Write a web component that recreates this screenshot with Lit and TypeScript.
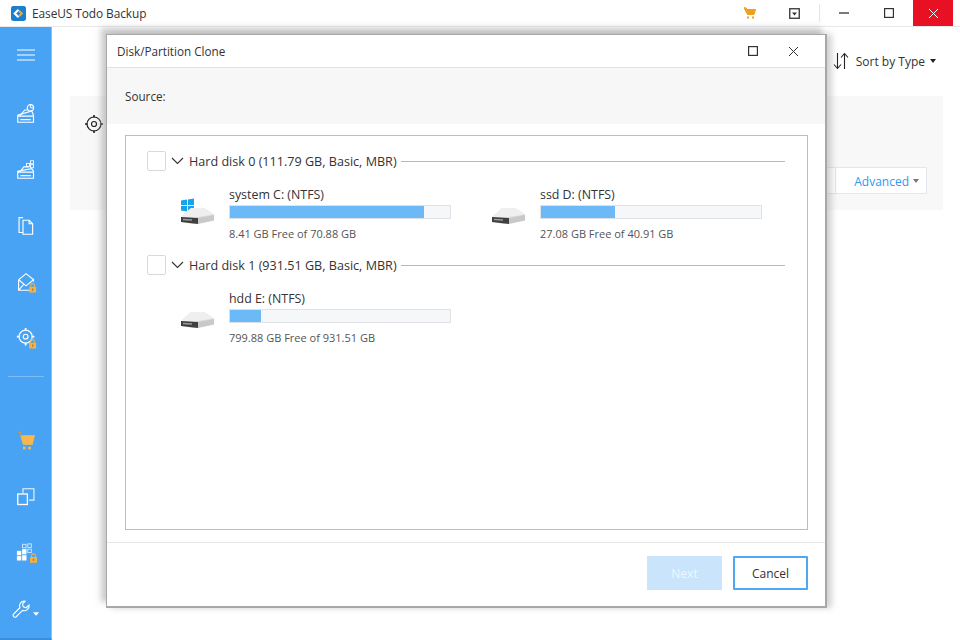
import { LitElement, html, css, svg } from "lit";
import { customElement } from "lit/decorators.js";

const lock = (x: number, y: number) => svg`<g transform="translate(${x} ${y})"><path d="M1.800 4V2.600a2.200 2.200 0 0 1 4.400 0V4" fill="none" stroke="#f5b044" stroke-width="1.200"/><rect x="0" y="4" width="8" height="6.500" rx=".6" fill="#f5b044"/><rect x="3.300" y="6" width="1.400" height="2.400" fill="#a9772a"/></g>`;

const navIcons = [
  svg`<path d="M5 14 10 8h4M18 9l2 5v8H2v-8zM2 15h18M5 19h12" fill="none" stroke="#fff" stroke-width="1.300"/><circle cx="16.500" cy="5.500" r="3.600" fill="none" stroke="#fff" stroke-width="1.300"/><path d="M16.500 2v3.500H20" fill="none" stroke="#fff" stroke-width="1"/>`,
  svg`<path d="M5 14 9 9h6M18 11l2 3v8H2v-8zM2 15h18M5 19h12" fill="none" stroke="#fff" stroke-width="1.300"/><rect x="12" y="5" width="3.500" height="3.500" fill="none" stroke="#fff"/><rect x="16.500" y="2" width="3.500" height="3.500" fill="none" stroke="#fff"/><rect x="16.500" y="6.500" width="3.500" height="3.500" fill="none" stroke="#fff"/>`,
  svg`<path d="M8 3H3.500v17H8M8 6h7l4 4v12H8zM15 6v4h4" fill="none" stroke="#fff" stroke-width="1.300"/>`,
  svg`<path d="M3 10 11.500 3 20 10M3 10v12h13M3 10l8.500 7 8.500-7v2M3 22l6-7" fill="none" stroke="#fff" stroke-width="1.300"/>${lock(15, 14)}`,
  svg`<circle cx="11" cy="11" r="7.500" fill="none" stroke="#fff" stroke-width="1.300"/><circle cx="11" cy="11" r="2.700" fill="none" stroke="#fff" stroke-width="1.300"/><path d="M11 1v3M11 18v3M1 11h3M18 11h3" stroke="#fff" stroke-width="2"/>${lock(15, 14)}`,
];
const navIcons2 = [
  svg`<path d="M5.500 5.500H21l-2.500 9.500H8.500z" fill="#f9b74e" stroke="#f9b74e" stroke-width="1.200"/><path d="M2.500 1.500h2.500l1.500 4.500" fill="none" stroke="#c99a4c" stroke-width="1.300"/><rect x="8" y="18" width="3" height="3" fill="#f9b74e"/><rect x="14" y="18" width="3" height="3" fill="#f9b74e"/>`,
  svg`<path d="M8 7V2h12.500v13H15" fill="none" stroke="#fff" stroke-width="1.300" opacity=".9"/><rect x="2" y="8" width="11" height="12" fill="none" stroke="#fff" stroke-width="1.500"/>`,
  svg`<g fill="#fff"><rect x="1" y="9" width="5" height="5"/><rect x="7" y="7" width="5" height="6"/><rect x="1" y="15" width="5" height="5"/><rect x="7" y="14" width="5" height="6"/></g><g fill="none" stroke="#fff" opacity=".8"><rect x="7.500" y="1.500" width="4" height="4"/><rect x="13.500" y="1" width="4" height="4"/><rect x="13.500" y="7" width="4" height="4"/></g>${lock(16, 12)}`,
  svg`<path d="M15 2.500a5.500 5.500 0 0 0-6 7.500L1.500 17.500a2.200 2.200 0 0 0 3 3L12 13a5.500 5.500 0 0 0 7.500-6L16 10l-3-1-1-3z" fill="none" stroke="#fff" stroke-width="1.300"/><path d="M24 15h7l-3.500 4z" fill="#fff"/>`,
];

const drive = (win: boolean) => html`<svg class="drive" viewBox="0 0 36 36" width="36" height="36">
  ${win ? svg`<g fill="#12a5ec" transform="translate(0 4)"><path d="M1 5.500 7 4.600V10H1zM8 4.400l6-.9V10H8zM1 11h6v5.400l-6-.9zM8 11h6v6.400l-6-.9z"/></g>` : ""}
  <path d="M1 26 11 17h13L34 23.500v6L13 33 1 31z" fill="#dcdcdc"/>
  <path d="M11 17h13L34 23.500 14 26.500 1 26z" fill="#efefef"/>
  <path d="M1 26 18 27V33L1 31z" fill="#3f3f3f"/>
  <path d="M18 27 34 24v5.500L18 33z" fill="#c9c9c9"/>
  <path d="M3 28.500 12 29" stroke="#9a9a9a" stroke-width="1.500"/>
</svg>`;

@customElement("app-root")
export class AppRoot extends LitElement {
  static styles = css`
    :host { display: block; width: 960px; height: 640px; overflow: hidden; position: relative; background: #fff;
      font-family: "Open Sans", "Noto Sans", sans-serif; color: #333; font-size: 11.700px; }
    * { box-sizing: border-box; }
    .titlebar { height: 27px; display: flex; align-items: center; background: #fff; border-bottom: 1px solid #e8e8e8; }
    .logo { margin: 0 6px 0 11px; }
    .app-name { font-size: 11.900px; color: #333; letter-spacing: -.08px; }
    .win { margin-left: auto; display: flex; align-items: center; height: 26px; padding-right: 7px; }
    .wbtn { width: 45px; height: 26px; display: flex; align-items: center; justify-content: center; }
    .wbtn.cart { width: 30px; margin-right: 12px; }
    .wbtn.drop { width: 36px; margin-right: 7px; }
    .wbtn.max { margin-right: 2px; }
    .wsep { width: 1px; height: 18px; background: #e5e5e5; margin-right: 1px; }
    .wbtn.close { width: 40px; background: #e81123; }
    .body { display: flex; height: 613px; }
    .side { width: 52px; background: #48a3f4; border-right: 1px solid #8ac4f7; border-bottom: 2px solid #3a8fdc;
      display: flex; flex-direction: column; align-items: center; padding-top: 22px; }
    .burger { width: 18px; height: 12px; margin-bottom: 38px; display: block; }
    .nav { width: 28px; height: 28px; display: flex; justify-content: center; align-items: center; margin-bottom: 28px; padding-left: 2px; }
    .nav svg { display: block; overflow: visible; }
    .rule { width: 36px; height: 1px; background: #7cbdf6; margin: -3px 0 50px; }
    .tools { margin-bottom: 0; padding-left: 0; }
    .main { flex: 1; padding: 20px 17px 0 18px; display: flex; flex-direction: column; }
    .sort { height: 28px; display: flex; justify-content: flex-end; align-items: center; gap: 7px; padding-right: 7px; font-size: 12px; }
    .sort .caret { width: 0; height: 0; border: 3.500px solid transparent; border-top: 4px solid #222; border-bottom: 0; margin-left: -2px; }
    .panel { margin-top: 21px; height: 114px; background: #f8f8f8; position: relative; display: flex; align-items: flex-end; justify-content: flex-end; padding: 0 16px 16px 0; }
    .cell { height: 27px; background: #fff; border: 1px solid #e2e6ee; }
    .cell.prev { width: 60px; border-right: 0; }
    .adv { width: 92px; display: flex; align-items: center; justify-content: flex-end; gap: 4px; padding: 1px 7px 0 0; color: #2b9af3; font-size: 12px; }
    .adv i { width: 0; height: 0; border: 3px solid transparent; border-top: 4px solid #777; border-bottom: 0; }
    .target { position: absolute; left: 14px; top: 18px; }

    .dialog { position: absolute; left: 106px; top: 34px; width: 721px; height: 574px; background: #fff;
      border: 2px solid #a8a8a8; border-width: 1px 2px 2px 1px; box-shadow: -5px -6px 6px rgba(150,150,150,.5), 5px 0 6px rgba(150,150,150,.4);
      display: flex; flex-direction: column; }
    .dhead { height: 33px; display: flex; align-items: center; padding-left: 10px; border-bottom: 1px solid #e3e3e3; flex: none; }
    .dtitle { flex: 1; }
    .dbtn { width: 40px; display: flex; justify-content: center; }
    .dbtn:last-child { margin-right: 12px; }
    .source { height: 56px; background: #f7f7f7; padding: 20px 0 0 18px; flex: none; line-height: 17px; }
    .tree { margin: 11px 17px 0 18px; height: 395px; flex: none; border: 1px solid #bdbdbd; padding: 14px 22px 0 21px; }
    .disk { display: flex; align-items: center; height: 22px; font-size: 12.600px; }
    .check { width: 19px; height: 20px; border: 1px solid #d5dae1; border-radius: 2px; margin-right: 5px; background: #fff; }
    .chev { margin-right: 5px; }
    .dname { white-space: nowrap; }
    .line { flex: 1; height: 1px; background: #b9b9b9; margin-left: 4px; }
    .parts { display: grid; grid-template-columns: 311px 273px; padding: 14px 0 6px 33px; }
    .part { display: flex; gap: 13px; height: 62px; }
    .drive { flex: none; margin-top: 5px; }
    .pinfo { width: 222px; flex: none; }
    .pname { line-height: 16px; height: 16px; margin-top: 1px; font-size: 12.400px; }
    .bar { height: 14px; margin-top: 2px; background: #f6f7f8; border: 1px solid #dfe3e8; }
    .fill { height: 100%; background: #6bb9f6; }
    .free { margin-top: 7px; font-size: 11px; color: #555; line-height: 15px; }
    .foot { margin-top: 12px; border-top: 1px solid #e6e6ea; flex: 1; display: flex; justify-content: flex-end; align-items: flex-start; gap: 11px; padding: 13px 17px 0 0; }
    .btn { width: 75px; height: 34px; display: flex; align-items: center; justify-content: center; font-size: 12px; }
    .next { background: #c9e4fb; color: #eef7ff; }
    .cancel { background: #fff; border: 2px solid #50a8f3; border-radius: 1px; color: #333; }
  `;

  private part(name: string, free: string, pct: number, win = false) {
    return html`<div class="part">${drive(win)}<div class="pinfo">
      <div class="pname">${name}</div>
      <div class="bar"><div class="fill" style="width:${pct}%"></div></div>
      <div class="free">${free}</div>
    </div></div>`;
  }

  private disk(name: string) {
    return html`<div class="disk"><div class="check"></div>
      <svg class="chev" width="13" height="8" viewBox="0 0 13 8"><path d="M1 1l5.500 5.500L12 1" fill="none" stroke="#333" stroke-width="1.100"/></svg>
      <span class="dname">${name}</span><div class="line"></div></div>`;
  }

  render() {
    return html`
      <div class="titlebar">
        <svg class="logo" width="15" height="15" viewBox="0 0 14 14"><rect width="14" height="14" rx="2" fill="#1b7fd0"/><path d="M7 3.500 3.500 7 7 10.500" fill="none" stroke="#fff" stroke-width="2"/><path d="M7.500 4.500 10 7 7.500 9.500" fill="none" stroke="#f5a623" stroke-width="2"/></svg>
        <span class="app-name">EaseUS Todo Backup</span>
        <div class="win">
          <div class="wbtn cart"><svg width="13" height="12" viewBox="0 0 13 12"><path d="M1 .8h2l1 1.700h8.500L11 7.500H4.500z" fill="#f0a020" stroke="#f0a020"/><rect x="4" y="9.500" width="2" height="2" fill="#f0a020"/><rect x="9" y="9.500" width="2" height="2" fill="#f0a020"/></svg></div>
          <div class="wbtn drop"><svg width="11" height="11" viewBox="0 0 11 11"><rect x=".75" y=".75" width="9.500" height="9.500" fill="none" stroke="#333" stroke-width="1.300"/><path d="M3 4.500h5L5.500 7.500z" fill="#333"/></svg></div>
          <div class="wsep"></div>
          <div class="wbtn"><svg width="10" height="2" viewBox="0 0 10 2"><path d="M0 1h10" stroke="#222" stroke-width="1.200"/></svg></div>
          <div class="wbtn max"><svg width="10" height="10" viewBox="0 0 10 10"><rect x=".6" y=".6" width="8.800" height="8.800" fill="none" stroke="#333" stroke-width="1.200"/></svg></div>
          <div class="wbtn close"><svg width="11" height="11" viewBox="0 0 11 11"><path d="M1 1l9 9M10 1l-9 9" stroke="#fff" stroke-width="1"/></svg></div>
        </div>
      </div>
      <div class="body">
        <aside class="side">
          <svg class="burger" viewBox="0 0 18 12"><path d="M0 1h18M0 6h18M0 11h18" stroke="#fff" stroke-width="1.200"/></svg>
          ${navIcons.map((i) => html`<div class="nav"><svg width="21" height="21" viewBox="0 0 24 24">${i}</svg></div>`)}
          <div class="rule"></div>
          ${navIcons2.map((i, n) => html`<div class="nav ${n === 3 ? "tools" : ""}"><svg width="${n === 3 ? 28 : 21}" height="21" viewBox="0 0 ${n === 3 ? 32 : 24} 24">${i}</svg></div>`)}
        </aside>
        <main class="main">
          <div class="sort">
            <svg width="16" height="18" viewBox="0 0 16 18"><path d="M4.500 1v15M1 12.500 4.500 16.500 8 12.500M11.500 17V2M8 5.500 11.500 1.500 15 5.500" fill="none" stroke="#222" stroke-width="1.100"/></svg>
            <span>Sort by Type</span><span class="caret"></span>
          </div>
          <section class="panel">
            <svg class="target" width="20" height="20" viewBox="0 0 20 20"><circle cx="10" cy="10" r="7" fill="none" stroke="#222" stroke-width="1.200"/><circle cx="10" cy="10" r="2.500" fill="none" stroke="#222" stroke-width="1.200"/><path d="M10 1v2.500M10 16.500V19M1 10h2.500M16.500 10H19" stroke="#222" stroke-width="1.600"/></svg>
            <div class="cell prev"></div>
            <div class="cell adv"><span>Advanced</span><i></i></div>
          </section>
        </main>
      </div>
      <div class="dialog">
        <div class="dhead"><span class="dtitle">Disk/Partition Clone</span>
          <div class="dbtn"><svg width="10" height="10" viewBox="0 0 10 10"><rect x=".6" y=".6" width="8.800" height="8.800" fill="none" stroke="#333" stroke-width="1.200"/></svg></div>
          <div class="dbtn"><svg width="11" height="11" viewBox="0 0 11 11"><path d="M1 1l9 9M10 1l-9 9" stroke="#333" stroke-width="1"/></svg></div>
        </div>
        <div class="source">Source:</div>
        <div class="tree">
          ${this.disk("Hard disk 0 (111.79 GB, Basic, MBR)")}
          <div class="parts">
            ${this.part("system C: (NTFS)", "8.41 GB Free of 70.88 GB", 88, true)}
            ${this.part("ssd D: (NTFS)", "27.08 GB Free of 40.91 GB", 33.500)}
          </div>
          ${this.disk("Hard disk 1 (931.51 GB, Basic, MBR)")}
          <div class="parts">
            ${this.part("hdd E: (NTFS)", "799.88 GB Free of 931.51 GB", 14)}
          </div>
        </div>
        <div class="foot">
          <div class="btn next">Next</div>
          <div class="btn cancel">Cancel</div>
        </div>
      </div>
    `;
  }
}
